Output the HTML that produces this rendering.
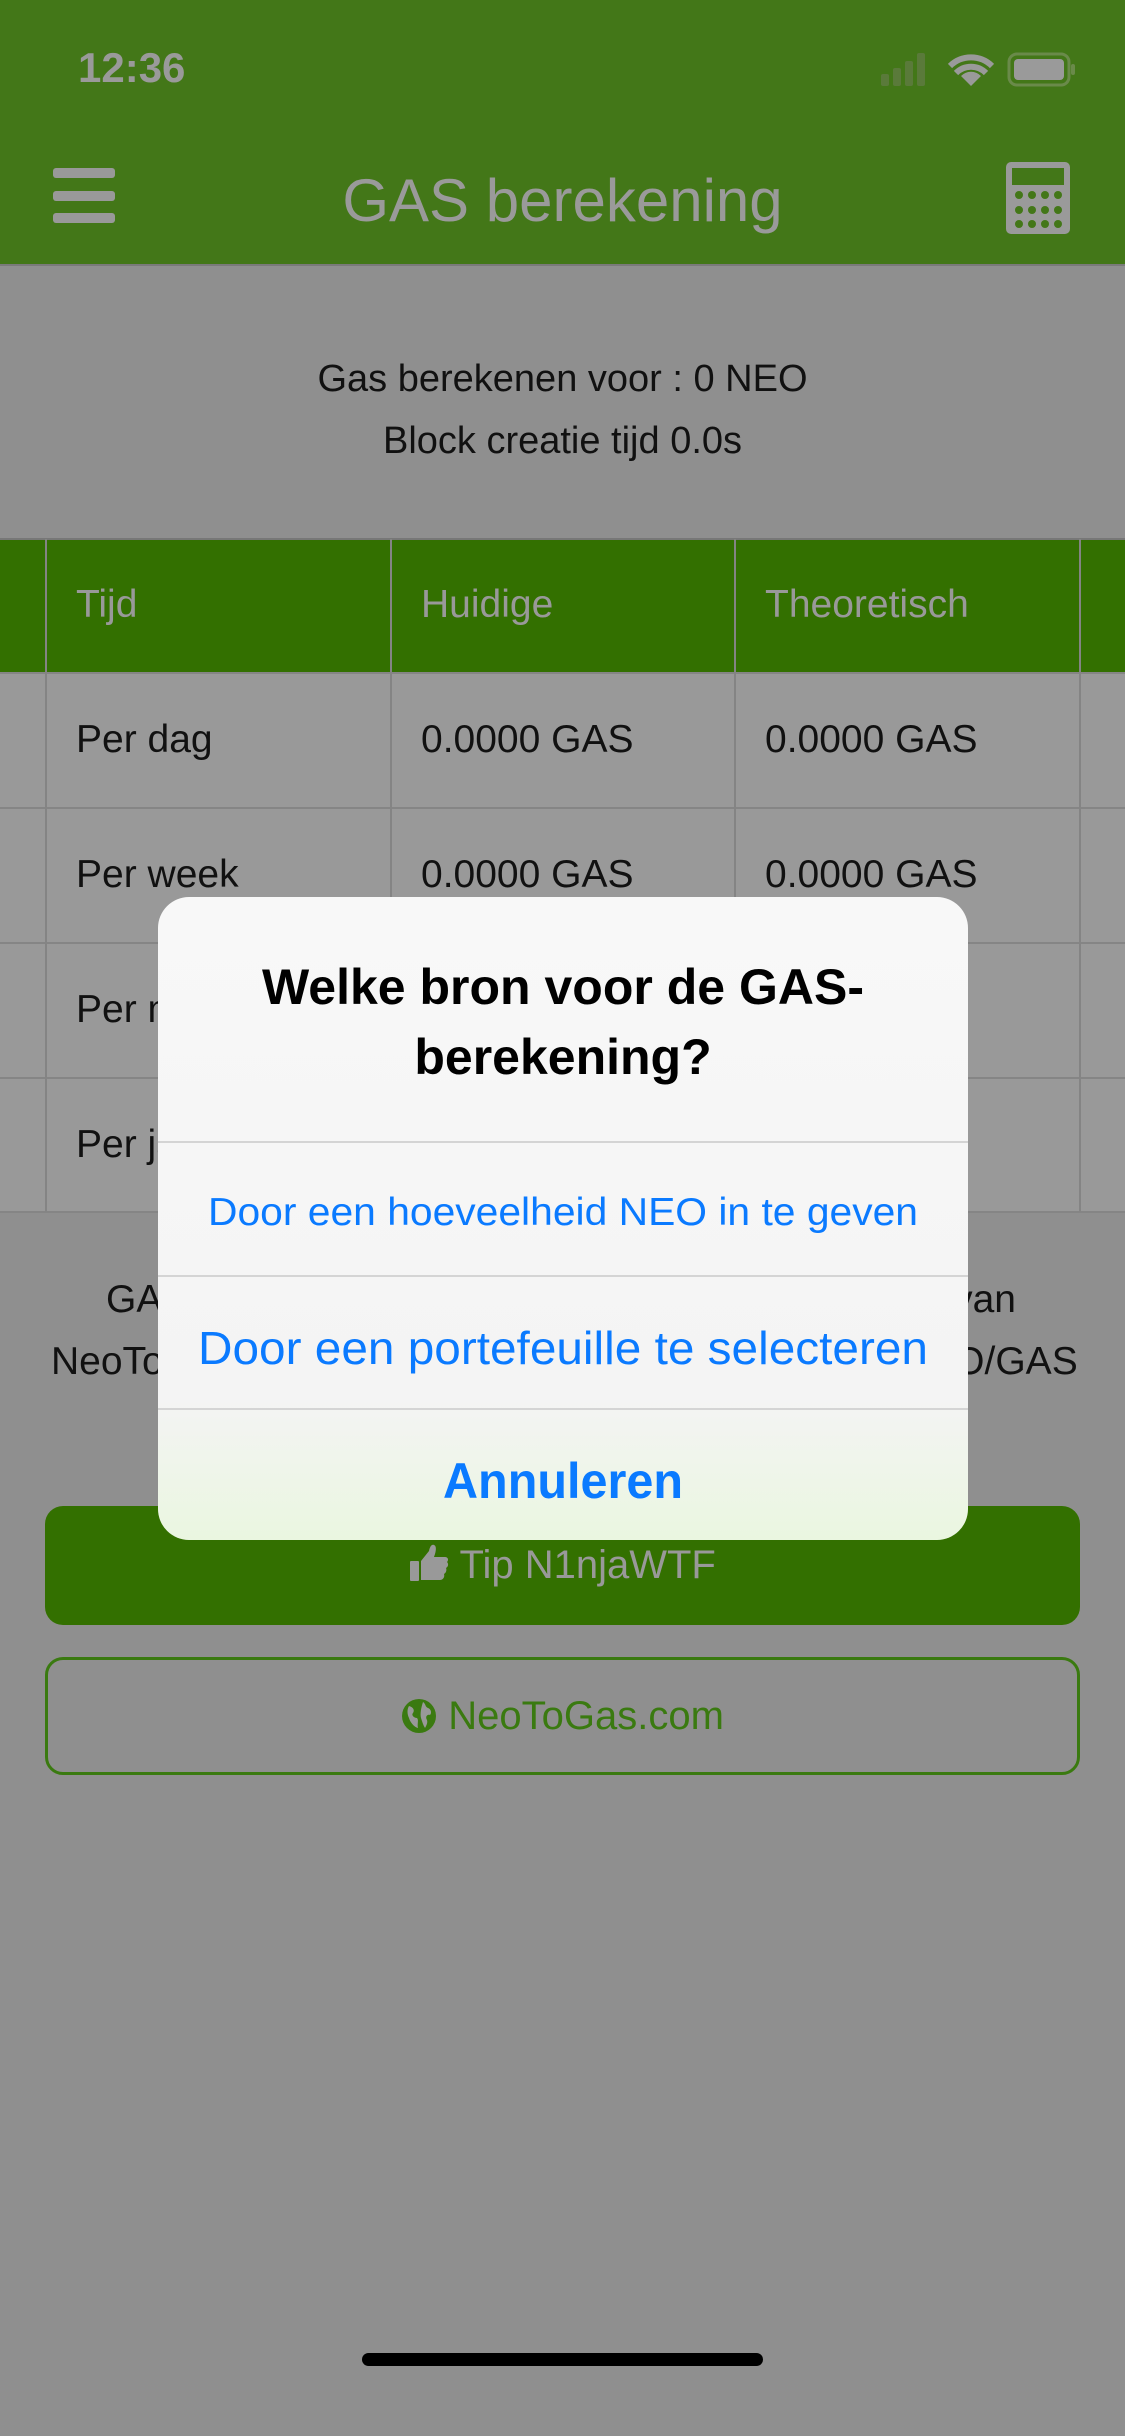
<!DOCTYPE html>
<html><head><meta charset="utf-8"><style>
*{margin:0;padding:0;box-sizing:border-box}
body{width:1125px;height:2436px;background:#8f8f8f;position:relative;overflow:hidden;font-family:"Liberation Sans",sans-serif}
.a{position:absolute}
.nav{left:0;top:0;width:1125px;height:264px;background:#437718}
.th{top:539px;height:133px;left:0;width:1125px;background:#337000}
.rows{top:672px;height:540px;left:0;width:1125px;background:#999}
.vl{width:2px;background:#848484}
.hl{height:2px;background:#858585;left:0;width:1125px}
.cell{font-size:39px;color:#111}
.hc{font-size:39px;color:#999}
</style></head><body>
<div class="a nav"></div>
<div class="a" style="left:78px;top:44px;font-size:42px;font-weight:bold;color:#9a9a9a">12:36</div>
<svg class="a" style="left:876px;top:48px" width="200" height="42">
<rect x="5" y="26" width="8" height="12" rx="2" fill="#5a7a3a"/>
<rect x="17" y="20" width="8" height="18" rx="2" fill="#5a7a3a"/>
<rect x="29" y="13" width="8" height="25" rx="2" fill="#5a7a3a"/>
<rect x="41" y="5" width="8" height="33" rx="2" fill="#5a7a3a"/>
<path d="M95 38 L85 28 A14 14 0 0 1 105 28 Z" fill="#9a9a9a"/>
<path d="M74 18 A30 30 0 0 1 116 18" stroke="#9a9a9a" stroke-width="6" fill="none"/>
<path d="M80 25 A21 21 0 0 1 110 25" stroke="#9a9a9a" stroke-width="6" fill="none"/>
<rect x="133" y="6" width="60" height="31" rx="8" fill="none" stroke="#6a8a4a" stroke-width="3"/>
<rect x="138" y="11" width="50" height="21" rx="4" fill="#9a9a9a"/>
<rect x="195" y="16" width="4" height="11" rx="2" fill="#6a8a4a"/>
</svg>
<div class="a" style="left:53px;top:168px;width:62px;height:10px;background:#999;border-radius:3px"></div>
<div class="a" style="left:53px;top:191px;width:62px;height:10px;background:#999;border-radius:3px"></div>
<div class="a" style="left:53px;top:213px;width:62px;height:10px;background:#999;border-radius:3px"></div>
<div class="a" style="left:0;top:166px;width:1125px;text-align:center;font-size:60px;color:#9a9a9a">GAS berekening</div>
<svg class="a" style="left:1004px;top:160px" width="68" height="76">
<rect x="2" y="2" width="64" height="72" rx="5" fill="#9a9a9a"/>
<rect x="8" y="8" width="52" height="17" fill="#437718"/>
<g fill="#437718">
<circle cx="15" cy="35" r="4"/><circle cx="28" cy="35" r="4"/><circle cx="41" cy="35" r="4"/><circle cx="54" cy="35" r="4"/>
<circle cx="15" cy="50" r="4"/><circle cx="28" cy="50" r="4"/><circle cx="41" cy="50" r="4"/><circle cx="54" cy="50" r="4"/>
<circle cx="15" cy="64" r="4"/><circle cx="28" cy="64" r="4"/><circle cx="41" cy="64" r="4"/><circle cx="54" cy="64" r="4"/>
</g></svg>
<div class="a" style="left:0;top:264px;width:1125px;height:2px;background:#7a7a7a"></div>
<div class="a" style="left:0;top:348px;width:1125px;text-align:center;font-size:38px;color:#111;line-height:62px">Gas berekenen voor : 0 NEO<br>Block creatie tijd 0.0s</div>
<div class="a th"></div>
<div class="a rows"></div>
<div class="a hl" style="top:538px;background:#777"></div>
<div class="a hl" style="top:672px"></div>
<div class="a hl" style="top:807px"></div>
<div class="a hl" style="top:942px"></div>
<div class="a hl" style="top:1077px"></div>
<div class="a hl" style="top:1211px"></div>
<div class="a vl" style="left:45px;top:539px;height:673px"></div>
<div class="a vl" style="left:390px;top:539px;height:673px"></div>
<div class="a vl" style="left:734px;top:539px;height:673px"></div>
<div class="a vl" style="left:1079px;top:539px;height:673px"></div>
<div class="a hc" style="left:76px;top:583px">Tijd</div>
<div class="a hc" style="left:421px;top:583px">Huidige</div>
<div class="a hc" style="left:765px;top:583px">Theoretisch</div>
<div class="a cell" style="left:76px;top:718px">Per dag</div>
<div class="a cell" style="left:421px;top:718px">0.0000 GAS</div>
<div class="a cell" style="left:765px;top:718px">0.0000 GAS</div>
<div class="a cell" style="left:76px;top:853px">Per week</div>
<div class="a cell" style="left:421px;top:853px">0.0000 GAS</div>
<div class="a cell" style="left:765px;top:853px">0.0000 GAS</div>
<div class="a cell" style="left:76px;top:988px">Per maand</div>
<div class="a cell" style="left:76px;top:1123px">Per jaar</div>
<div class="a cell" style="left:106px;top:1278px">GAS berekening</div>
<div class="a cell" style="left:900px;top:1278px;width:116px;text-align:right">van</div>
<div class="a cell" style="left:51px;top:1340px">NeoToGas</div>
<div class="a cell" style="left:900px;top:1340px;width:172px;text-align:right">NEO/GAS</div>
<div class="a" style="left:45px;top:1506px;width:1035px;height:119px;background:#337000;border-radius:18px;text-align:center;font-size:40px;color:#999;line-height:119px"><svg width="40" height="40" viewBox="0 0 40 40" style="vertical-align:-5px"><rect x="1" y="18" width="9" height="20" rx="1" fill="#999"/><path d="M12 18 L20 8 C21 3 23 1 25 2 C28 3 27 9 25 14 L36 14 C39 14 40 17 38 19 C40 21 39 24 37 25 C38 27 37 30 35 31 C36 34 34 37 31 37 L12 37 Z" fill="#999"/></svg> Tip N1njaWTF</div>
<div class="a" style="left:45px;top:1657px;width:1035px;height:118px;border:3px solid #3a7a10;border-radius:18px;text-align:center;font-size:40px;color:#3a7a10;line-height:112px"><svg width="36" height="36" viewBox="0 0 36 36" style="vertical-align:-5px"><circle cx="18" cy="18" r="17" fill="#3a7a10"/><path d="M8 8 C12 9 14 12 12 15 C10 17 13 20 16 20 C18 22 16 26 17 30 C13 29 9 24 8 20 C6 16 6 11 8 8 Z M22 4 C25 6 24 9 27 10 C30 11 31 15 29 17 C26 16 24 19 26 22 C27 25 25 28 24 30 C22 27 21 23 20 20 C19 16 20 10 22 4 Z" fill="#999"/></svg> NeoToGas.com</div>
<div class="a" style="left:362px;top:2353px;width:401px;height:13px;border-radius:7px;background:#000"></div>

<div class="a" style="left:158px;top:897px;width:810px;height:643px;border-radius:31px;overflow:hidden;background:linear-gradient(#f8f8f8 0%,#f4f4f4 78%,#eaf6e0 100%)">
<div class="a" style="left:0;top:55px;width:810px;text-align:center;font-size:50px;font-weight:bold;color:#000;line-height:70px">Welke bron voor de GAS-<br>berekening?</div>
<div class="a" style="left:0;top:244px;width:810px;height:2px;background:#d4d4d4"></div>
<div class="a" style="left:0;top:378px;width:810px;height:2px;background:#d4d4d4"></div>
<div class="a" style="left:0;top:511px;width:810px;height:2px;background:#d4d4d4"></div>
<svg class="a" style="left:0;top:246px" width="810" height="400">
<text x="405" y="82" text-anchor="middle" font-family="Liberation Sans" font-size="39" fill="#0a7aff" textLength="710" lengthAdjust="spacingAndGlyphs">Door een hoeveelheid NEO in te geven</text>
<text x="405" y="221" text-anchor="middle" font-family="Liberation Sans" font-size="46" fill="#0a7aff" textLength="730" lengthAdjust="spacingAndGlyphs">Door een portefeuille te selecteren</text>
<text x="405" y="355" text-anchor="middle" font-family="Liberation Sans" font-weight="bold" font-size="50" fill="#0a7aff" textLength="240" lengthAdjust="spacingAndGlyphs">Annuleren</text>
</svg>
</div>
</body></html>
